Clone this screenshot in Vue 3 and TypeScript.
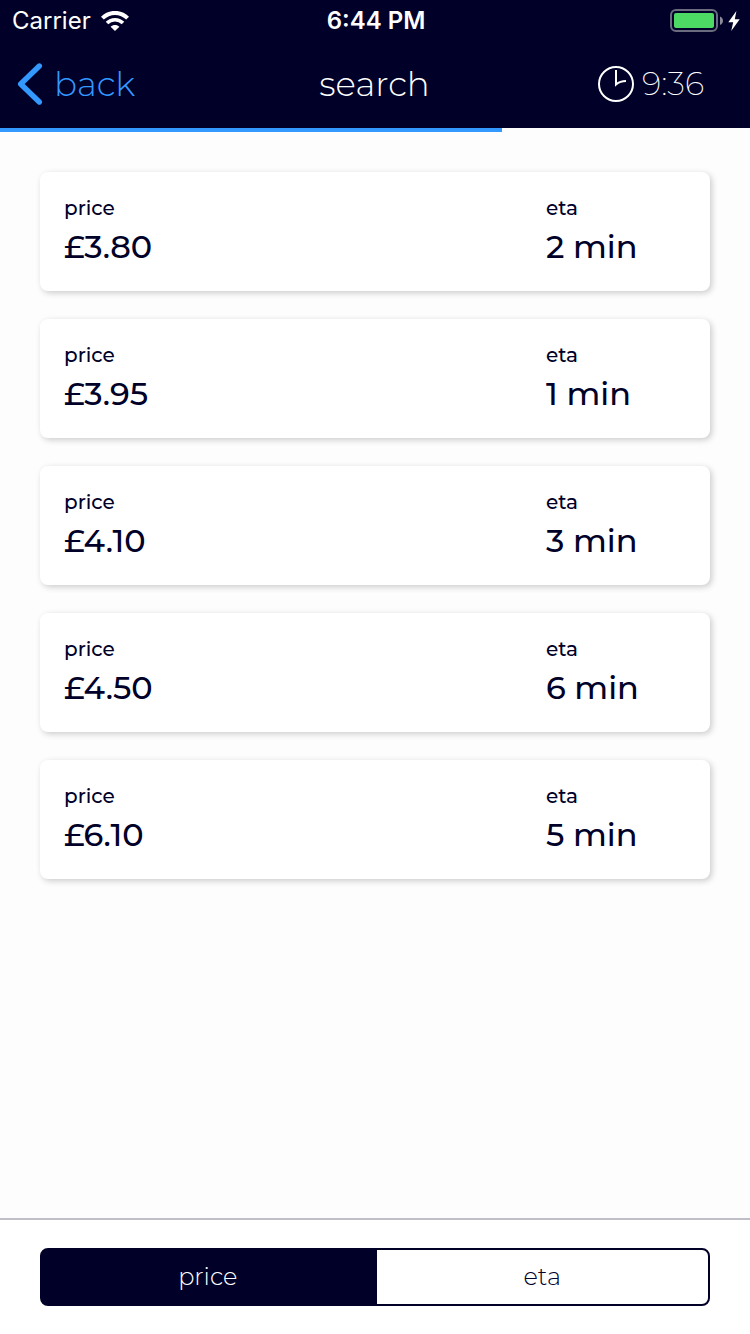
<script setup lang="ts">
import { computed, ref } from 'vue'

type SortKey = 'price' | 'eta'

interface Offer {
  price: number
  eta: number
}

const sortKeys: SortKey[] = ['price', 'eta']
const sortBy = ref<SortKey>('price')

const secondsLeft = ref(576)
const progress = ref(66.9)

const offers = ref<Offer[]>([
  { price: 3.8, eta: 2 },
  { price: 3.95, eta: 1 },
  { price: 4.1, eta: 3 },
  { price: 4.5, eta: 6 },
  { price: 6.1, eta: 5 },
])

const sortedOffers = computed(() =>
  [...offers.value].sort((a, b) => a[sortBy.value] - b[sortBy.value]),
)

const countdown = computed(() => {
  const minutes = Math.floor(secondsLeft.value / 60)
  const seconds = String(secondsLeft.value % 60).padStart(2, '0')
  return `${minutes}:${seconds}`
})
</script>

<template>
  <div class="screen">
    <header class="header">
      <div class="status">
        <div class="carrier">
          <span>Carrier</span>
          <svg width="28" height="20" viewBox="0 0 28 20" fill="none" aria-hidden="true">
            <path d="M1.4 7.2C8.4 0.1 19.6 0.1 26.6 7.2" stroke="#fff" stroke-width="4" />
            <path d="M6 12C10.5 7.6 17.5 7.6 22 12" stroke="#fff" stroke-width="3.6" />
            <path d="M9.6 15.7C12.1 13.3 15.9 13.3 18.4 15.7L14 20Z" fill="#fff" />
          </svg>
        </div>
        <span class="clock">6:44 PM</span>
        <div class="power">
          <svg width="54" height="24" viewBox="0 0 54 24" fill="none" aria-hidden="true">
            <rect x="1" y="1" width="46" height="21" rx="5" stroke="#6b6b80" stroke-width="2" />
            <rect x="4" y="4" width="40" height="15" rx="2" fill="#4cd964" />
            <path d="M50 7.5C54 9 54 14.5 50 16Z" fill="#8a8a99" />
          </svg>
          <svg width="12" height="20" viewBox="0 0 12 20" aria-hidden="true">
            <path d="M8.4 0L0.3 11.2H5.2L3.2 20L11.7 8.2H6.8Z" fill="#fff" />
          </svg>
        </div>
      </div>

      <nav class="nav">
        <button class="back" type="button">
          <svg width="26" height="44" viewBox="0 0 26 44" fill="none" aria-hidden="true">
            <path
              d="M22.3 4L3.7 22L22.3 40"
              stroke="#3399ff"
              stroke-width="5.4"
              stroke-linecap="round"
              stroke-linejoin="round"
            />
          </svg>
          <span>back</span>
        </button>
        <h1 class="title">search</h1>
        <div class="timer">
          <svg width="36" height="36" viewBox="0 0 36 36" fill="none" aria-hidden="true">
            <circle cx="18" cy="18" r="17" stroke="#fff" stroke-width="2" />
            <path d="M18 4V18.5C21 16 24 15 28 15" stroke="#fff" stroke-width="2" />
          </svg>
          <span>{{ countdown }}</span>
        </div>
      </nav>
    </header>

    <div class="track">
      <div class="bar" :style="{ width: progress + '%' }"></div>
    </div>

    <main class="content">
      <ul class="offers">
        <li v-for="offer in sortedOffers" :key="offer.price" class="card">
          <dl class="field">
            <dt>price</dt>
            <dd>£{{ offer.price.toFixed(2) }}</dd>
          </dl>
          <dl class="field eta">
            <dt>eta</dt>
            <dd>{{ offer.eta }} min</dd>
          </dl>
        </li>
      </ul>
    </main>

    <footer class="footer">
      <div class="segments" role="group" aria-label="Sort by">
        <button
          v-for="key in sortKeys"
          :key="key"
          type="button"
          class="segment"
          :class="{ active: sortBy === key }"
          :aria-pressed="sortBy === key"
          @click="sortBy = key"
        >
          {{ key }}
        </button>
      </div>
    </footer>
  </div>
</template>

<style>
body {
  margin: 0;
}
</style>

<style scoped>
.screen {
  display: flex;
  flex-direction: column;
  min-height: 100vh;
  background: #fdfdfd;
  color: #000029;
  font-family: Montserrat, Inter, "Liberation Sans", sans-serif;
}

.header {
  background: #000029;
  color: #fff;
}

.status {
  display: grid;
  grid-template-columns: 1fr auto 1fr;
  align-items: center;
  box-sizing: border-box;
  height: 40px;
  padding: 2px 10px 0 12px;
  font-family: Inter, "Liberation Sans", sans-serif;
  font-size: 24px;
  line-height: 28px;
}

.carrier {
  display: flex;
  align-items: center;
  gap: 10px;
}

.clock {
  font-weight: 600;
}

.power {
  display: flex;
  align-items: center;
  justify-content: flex-end;
  gap: 4px;
}

.nav {
  display: grid;
  grid-template-columns: 1fr auto 1fr;
  align-items: center;
  height: 88px;
  padding: 0 18px 0 17px;
  font-size: 34px;
  font-weight: 300;
  line-height: 40px;
}

.back {
  display: flex;
  align-items: center;
  justify-self: start;
  gap: 11px;
  padding: 0;
  border: 0;
  background: none;
  color: #3399ff;
  font: inherit;
  cursor: pointer;
}

.title {
  margin: 0;
  font: inherit;
}

.timer {
  display: flex;
  align-items: center;
  justify-content: flex-end;
  gap: 8px;
  padding-right: 28px;
  font-size: 32px;
  font-weight: 200;
}

.track {
  height: 4px;
}

.bar {
  height: 100%;
  background: #3399ff;
}

.content {
  flex: 1;
  padding: 40px;
}

.offers {
  display: flex;
  flex-direction: column;
  gap: 28px;
  margin: 0;
  padding: 0;
  list-style: none;
}

.card {
  display: flex;
  justify-content: space-between;
  padding: 24px;
  border-radius: 8px;
  background: #fff;
  box-shadow: 2px 2px 6px rgba(0, 0, 0, 0.2);
}

.field {
  margin: 0;
  font-weight: 500;
}

.field dt {
  font-size: 20px;
  line-height: 24px;
}

.field dd {
  margin: 7px 0 0;
  font-size: 32px;
  line-height: 40px;
}

.eta {
  width: 140px;
}

.footer {
  padding: 28px 40px;
  border-top: 2px solid #bfbfc9;
  background: #fff;
}

.segments {
  display: flex;
}

.segment {
  flex: 1;
  padding: 11px 0;
  border: 2px solid #000029;
  background: #fff;
  color: #000029;
  font-family: inherit;
  font-size: 24px;
  font-weight: 300;
  line-height: 32px;
  cursor: pointer;
}

.segment:first-child {
  border-radius: 8px 0 0 8px;
}

.segment:last-child {
  border-left-width: 1px;
  border-radius: 0 8px 8px 0;
}

.segment.active {
  background: #000029;
  color: #fff;
}
</style>
